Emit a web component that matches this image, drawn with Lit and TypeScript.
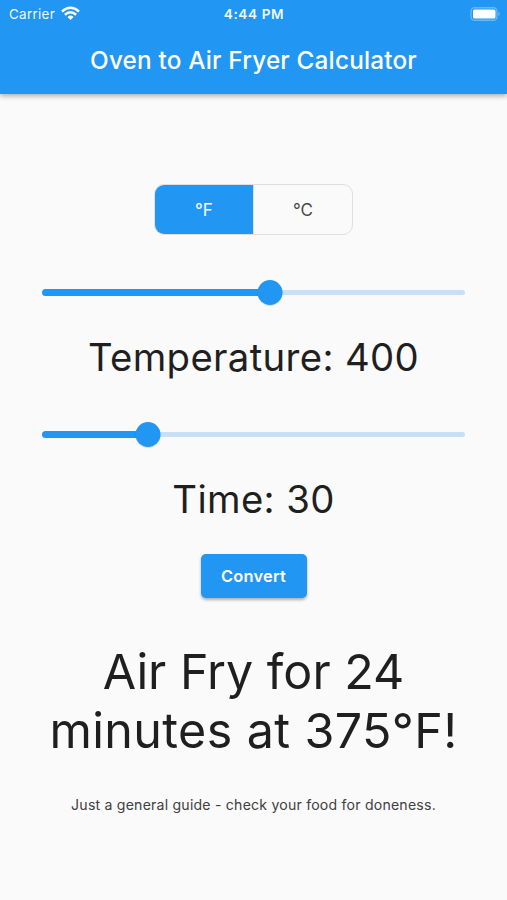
import { LitElement, html, css } from "lit";
import { customElement, property, state } from "lit/decorators.js";

@customElement("range-slider")
class RangeSlider extends LitElement {
  @property({ type: Number }) fraction = 0;
  static styles = css`
    :host { display: block; height: 25px; }
    .track { position: relative; height: 25px; display: flex; align-items: center; }
    .active { height: 7px; border-radius: 4px; background: #2196f3; }
    .rest { flex: 1; height: 4.5px; border-radius: 0 2.5px 2.5px 0; background: #c7e0f8; }
    .thumb { position: absolute; top: 0; width: 25px; height: 25px; border-radius: 50%; background: #2196f3; transform: translateX(-50%); box-shadow: 0 1px 1px rgba(0,0,0,.12); }
  `;
  render() {
    const p = `${this.fraction * 100}%`;
    return html`<div class="track">
      <div class="active" style="width:${p}"></div><div class="rest"></div>
      <div class="thumb" style="left:${p}"></div>
    </div>`;
  }
}

@customElement("app-root")
class AppRoot extends LitElement {
  @state() unit = "F";
  static styles = css`
    :host { display: block; height: 900px; background: #fafafa; font-family: Inter, "Liberation Sans", sans-serif; color: #1f1f1f; overflow: hidden; }
    .page { display: flex; flex-direction: column; height: 900px; }
    .header { height: 94px; background: #2196f3; color: #fff; box-shadow: 0 2px 5px rgba(0,0,0,.32); box-sizing: border-box; }
    .status { height: 27px; display: grid; grid-template-columns: 1fr auto 1fr; align-items: center; padding: 0 6px 0 9px; font-size: 13.4px; letter-spacing: 0.3px; color: #f0f8ff; }
    .carrier { display: flex; align-items: center; gap: 6px; }
    .clock { font-weight: 600; font-size: 13.6px; letter-spacing: 0.6px; margin-right: 2px; }
    .battery { justify-self: end; display: block; }
    .wifi { display: block; }
    h1 { margin: 0; height: 66px; line-height: 66px; text-align: center; font-size: 24.3px; letter-spacing: 0.19px; font-weight: 500; white-space: nowrap; }
    .body { display: flex; flex-direction: column; align-items: stretch; padding: 90px 42px 0; }
    .units { align-self: center; display: flex; width: 199px; height: 51px; box-sizing: border-box; border: 1px solid #dfdfdf; border-radius: 10px; overflow: hidden; font-size: 17px; }
    .unit { flex: 1; display: grid; place-items: center; cursor: pointer; color: #484848; }
    .unit + .unit { border-left: 1px solid #dfdfdf; }
    .unit.selected { background: #2196f3; color: #fff; }
    .first { margin-top: 45px; }
    .second { margin-top: 25px; }
    .value { height: 80px; margin-top: 12px; line-height: 80px; text-align: center; white-space: nowrap; font-size: 38.3px; letter-spacing: 0.36px; }
    .convert { align-self: center; margin-top: 15px; width: 106px; height: 44px; border: 0; border-radius: 5px; background: #2196f3; color: #fff; font: 600 16.4px Inter, sans-serif; letter-spacing: 0.2px; padding: 0; box-shadow: 0 2px 3px rgba(0,0,0,.3); }
    .result { margin: 44px -20px 0; text-align: center; font-size: 48.4px; line-height: 59px; white-space: nowrap; }
    .line { display: block; }
    .line + .line { letter-spacing: 0.4px; }
    .note { margin-top: 35px; text-align: center; font-size: 14.1px; letter-spacing: 0.21px; line-height: 20px; white-space: nowrap; color: #404040; }
  `;
  render() {
    return html`<div class="page">
      <header class="header">
        <div class="status">
          <div class="carrier"><span>Carrier</span>
            <svg class="wifi" width="19" height="15" viewBox="0 0 19 15" fill="none" stroke="#fff" stroke-width="2.5"><path d="M1 5.6Q9.5-2 18 5.6M3.9 8.8Q9.5 3.8 15.1 8.8"/><path d="M6.5 10.9Q9.5 8.2 12.5 10.9L9.5 14Z" fill="#fff" stroke="none"/></svg>
          </div>
          <div class="clock">4:44 PM</div>
          <svg class="battery" width="31" height="14" viewBox="0 0 31 14"><rect x="1" y=".7" width="26" height="12.6" rx="3.6" fill="none" stroke="#6ab8f7" stroke-width="1.4"/><rect x="3" y="2.5" width="22.5" height="9" rx="1.5" fill="#fff"/><path d="M28.5 4.8Q31 7 28.5 9.2Z" fill="#75bdf7"/></svg>
        </div>
        <h1>Oven to Air Fryer Calculator</h1>
      </header>
      <main class="body">
        <div class="units">
          ${["F", "C"].map((u) => html`<div class="unit ${this.unit === u ? "selected" : ""}" @click=${() => (this.unit = u)}>°${u}</div>`)}
        </div>
        <range-slider class="first" .fraction=${0.54}></range-slider>
        <div class="value">Temperature: 400</div>
        <range-slider class="second" .fraction=${0.25}></range-slider>
        <div class="value">Time: 30</div>
        <button class="convert">Convert</button>
        <div class="result"><span class="line">Air Fry for 24</span><span class="line">minutes at 375°F!</span></div>
        <div class="note">Just a general guide - check your food for doneness.</div>
      </main>
    </div>`;
  }
}
